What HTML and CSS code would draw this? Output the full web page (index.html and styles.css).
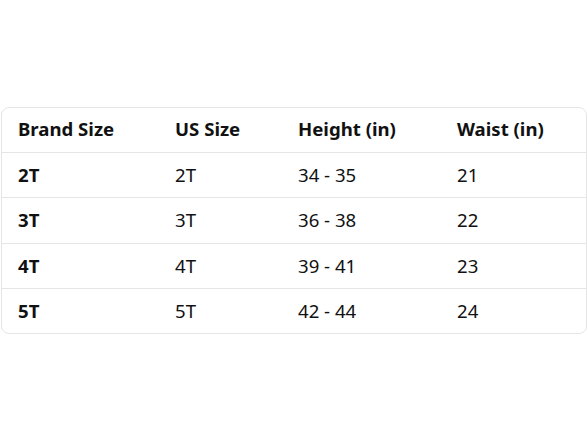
FILE: index.html
```html
<!DOCTYPE html>
<html>
<head>
<meta charset="utf-8">
<link rel="stylesheet" href="styles.css">
</head>
<body>
<div class="page">
  <div class="card">
    <table class="size-table">
      <colgroup>
        <col class="c1"><col class="c2"><col class="c3"><col class="c4">
      </colgroup>
      <thead>
        <tr><th>Brand Size</th><th>US Size</th><th>Height (in)</th><th>Waist (in)</th></tr>
      </thead>
      <tbody>
        <tr><td class="b">2T</td><td>2T</td><td>34 - 35</td><td>21</td></tr>
        <tr><td class="b">3T</td><td>3T</td><td>36 - 38</td><td>22</td></tr>
        <tr><td class="b">4T</td><td>4T</td><td>39 - 41</td><td>23</td></tr>
        <tr><td class="b">5T</td><td>5T</td><td>42 - 44</td><td>24</td></tr>
      </tbody>
    </table>
  </div>
</div>
</body>
</html>
```
FILE: styles.css
```css
html, body { margin: 0; padding: 0; background: #ffffff; }
.page {
  width: 588px;
  height: 441px;
  padding: 107px 1px 0 1px;
  box-sizing: border-box;
  font-family: "Noto Sans", "Open Sans", sans-serif;
  color: #111111;
}
.card {
  border: 1px solid #e6e6e6;
  border-radius: 8px;
  overflow: hidden;
}
.size-table {
  width: 100%;
  border-collapse: collapse;
  table-layout: fixed;
  font-size: 18.6px;
}
.c1 { width: 157px; }
.c2 { width: 123px; }
.c3 { width: 159px; }
.c4 { width: auto; }
.size-table th, .size-table td {
  text-align: left;
  padding: 1px 0 1px 16px;
  height: 42.3px;
  line-height: 20px;
  vertical-align: middle;
  font-weight: 400;
}
.size-table th { height: 42px; padding: 0 0 2px 16px; }
.size-table th { font-weight: 700; }
.size-table td.b { font-weight: 700; }
.size-table tbody tr td { border-top: 1px solid #e6e6e6; }
```
